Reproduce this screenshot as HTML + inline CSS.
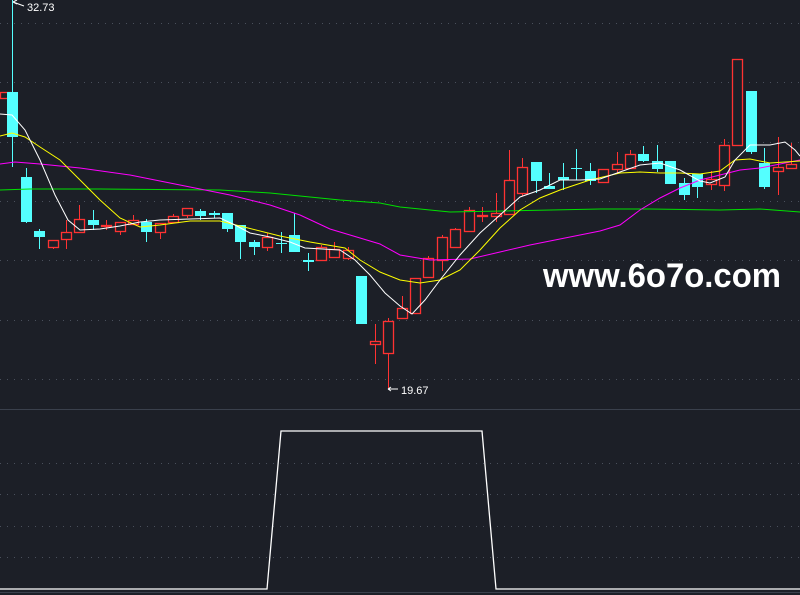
<!DOCTYPE html>
<html><head><meta charset="utf-8"><style>
html,body{margin:0;padding:0;background:#1c1f27;width:800px;height:595px;overflow:hidden}
svg{display:block}
</style></head><body>
<svg id="s" width="800" height="595" viewBox="0 0 800 595" xmlns="http://www.w3.org/2000/svg">
<rect width="800" height="595" fill="#1c1f27"/>
<g stroke="#4a505c" stroke-width="1" stroke-dasharray="1,6">
<line x1="0" y1="23.5" x2="800" y2="23.5"/><line x1="0" y1="82.5" x2="800" y2="82.5"/>
<line x1="0" y1="142.5" x2="800" y2="142.5"/><line x1="0" y1="201.5" x2="800" y2="201.5"/>
<line x1="0" y1="260.5" x2="800" y2="260.5"/><line x1="0" y1="320.5" x2="800" y2="320.5"/>
<line x1="0" y1="379.5" x2="800" y2="379.5"/>
<line x1="0" y1="463.5" x2="800" y2="463.5"/><line x1="0" y1="494.5" x2="800" y2="494.5"/>
<line x1="0" y1="526.5" x2="800" y2="526.5"/><line x1="0" y1="557.5" x2="800" y2="557.5"/>
</g>
<line x1="0" y1="409.5" x2="800" y2="409.5" stroke="#3a404c"/>
<line x1="0" y1="592.5" x2="800" y2="592.5" stroke="#3a404c"/>
<g id="c"></g>
<g fill="none" stroke-width="1">
<polyline stroke="#00e000" points="0,190 30,189 100,189 220,190 270,193 340,200 380,203 400,207 420,209 450,212 600,209 650,209 720,210 760,209 800,212"/>
<polyline stroke="#ff00ff" points="0,164 15,162 40,164 80,168 130,175 180,185 230,195 270,205 300,215 330,229 350,235 380,244 400,255 430,260 470,259 500,252 530,245 560,239 600,231 620,225 640,210 660,198 680,188 700,180 720,175 740,170 760,168 800,160"/>
<polyline stroke="#ffff00" points="0,136 12,133 25,137 40,147 60,160 80,180 100,200 120,218 140,227 160,225 190,221 220,221 240,226 280,236 310,242 345,248 360,260 380,272 400,280 420,283 440,280 460,270 480,250 500,228 520,210 540,198 560,190 590,180 620,173 640,172 660,173 680,173 700,174 720,171 735,160 750,159 770,163 800,161"/>
<polyline stroke="#ffffff" points="0,114 12,115 25,130 40,160 55,195 68,220 80,230 100,229 120,226 140,222 160,220 190,219 220,218 235,225 250,233 270,237 290,242 305,248 340,250 355,260 370,275 385,293 400,306 412,314 425,300 440,280 460,255 480,233 500,215 520,197 540,190 560,180 580,180 600,179 620,172 640,165 660,163 680,170 700,181 710,183 725,177 735,160 750,145 770,145 785,142 795,150 800,156"/>
</g>
<polyline fill="none" stroke="#ffffff" stroke-width="1.3" points="0,589 267,589 281,431 482,431 496,589 800,589"/>
<g stroke="#ffffff" fill="none"><path d="M13,2 L17,4 M13,2 L17,0 M13,2 L24,6"/><path d="M388,389 L398,389 M388,389 L391,387 M388,389 L391,391"/></g>
<text x="27" y="11" fill="#ffffff" font-family="Liberation Sans, sans-serif" font-size="11">32.73</text>
<text x="401" y="394" fill="#ffffff" font-family="Liberation Sans, sans-serif" font-size="11">19.67</text>
<text x="543" y="287" fill="#ffffff" font-family="Liberation Sans, sans-serif" font-weight="bold" font-size="34" textLength="238" lengthAdjust="spacingAndGlyphs">www.6o7o.com</text>
</svg>
<script>
var d=[
[0,'r',92,98,92,98],[7,'c',92,137,0,167],[21,'c',177,222,168,223],[34,'c',231,237,229,249],[48,'r',240,247,240,249],
[61,'r',232,239,220,249],[74,'r',219,232,205,232],[88,'c',220,225,210,230],[101,'r',225,226,220,230],[115,'r',222,231,222,235],
[128,'r',220,224,215,224],[141,'c',222,232,219,242],[155,'r',223,232,223,239],[168,'r',216,222,214,222],[182,'r',208,215,208,218],
[195,'c',211,216,209,220],[209,'c',213,215,211,218],[222,'c',213,229,213,232],[235,'c',225,242,225,259],[249,'c',242,247,240,255],
[262,'r',237,247,233,251],[276,'c',243,244,232,253],[289,'c',235,252,213,252],[303,'c',260,262,253,271],[316,'r',247,260,245,261],
[329,'r',249,257,242,257],[343,'r',250,258,247,260],[356,'c',276,324,276,324],[370,'r',341,344,324,364],[383,'r',321,353,318,388],
[397,'r',308,318,296,318],[410,'r',278,313,278,313],[423,'r',258,277,256,277],[437,'r',237,260,235,271],[450,'r',229,247,228,247],
[464,'r',210,231,207,231],[477,'r',215,216,207,222],[491,'r',213,216,193,222],[504,'r',180,214,150,214],[517,'r',167,193,158,196],
[531,'c',162,181,162,193],[544,'c',186,189,173,189],[558,'c',177,180,163,190],[571,'c',168,169,149,180],[585,'c',171,181,163,185],
[598,'r',169,182,169,182],[612,'r',164,169,152,174],[625,'r',154,168,150,168],[638,'c',154,161,146,162],[652,'c',161,169,145,172],
[665,'c',161,184,161,184],[679,'c',183,195,178,200],[692,'c',174,187,174,198],[706,'r',179,184,171,190],[719,'r',145,185,139,191],
[732,'r',59,145,59,145],[746,'c',91,152,91,154],[759,'c',163,187,148,189],[773,'r',167,171,137,195],[786,'r',164,168,143,168]];
var h='';
d.forEach(function(k){var x=k[0],w=10,cx=x+5.5,col=k[1]=='r'?'#ff3232':'#54ffff';
h+='<line x1="'+cx+'" y1="'+k[4]+'" x2="'+cx+'" y2="'+k[5]+'" stroke="'+col+'" stroke-width="1"/>';
var bh=Math.max(1,k[3]-k[2]);
if(k[1]=='r'){h+='<rect x="'+(x+0.5)+'" y="'+(k[2]+0.5)+'" width="'+w+'" height="'+bh+'" fill="#1c1f27" stroke="'+col+'" stroke-width="1.3"/>';}
else{h+='<rect x="'+x+'" y="'+k[2]+'" width="'+(w+1)+'" height="'+bh+'" fill="'+col+'"/>';}
});
document.getElementById('c').innerHTML=h;
</script>
</body></html>
